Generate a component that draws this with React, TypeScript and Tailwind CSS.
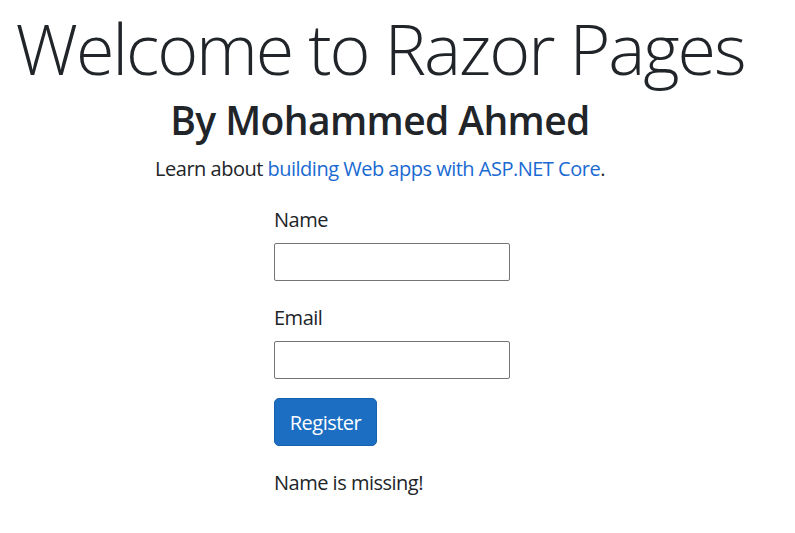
import React from "react";

export default function App() {
  return (
    <div className="min-h-[533px] bg-white text-[#212529]" style={{ fontFamily: '"Open Sans", "Noto Sans", sans-serif' }}>
      <div className="w-[760px] text-center">
        <h1 className="whitespace-nowrap text-[70px] font-light leading-[96px] tracking-[-2.1px]">Welcome to Razor Pages</h1>
        <h2 className="mt-[-3px] text-[39px] font-semibold leading-[54px] tracking-[-0.6px]">By Mohammed Ahmed</h2>
        <p className="mt-[7px] text-[20px] leading-[30px] tracking-[-0.5px]">
          Learn about{" "}
          <a href="#" className="text-[#1a6ad2]">
            building Web apps with ASP.NET Core
          </a>
          .
        </p>
      </div>
      <form className="mt-[19px] flex flex-col items-start pl-[274px] text-[20px] tracking-[-0.5px]">
        <label className="pt-[2px] leading-[30px]">Name</label>
        <input className="mt-[8px] h-[38px] w-[236px] rounded-[2px] border border-[#767676] bg-white" />
        <label className="mt-[20px] pt-[2px] leading-[30px]">Email</label>
        <input className="mt-[8px] h-[38px] w-[236px] rounded-[2px] border border-[#767676] bg-white" />
        <button type="button" className="mt-[19px] h-[48px] w-[103px] rounded-[5px] border border-[#1861ac] bg-[#1b6ec2] pt-[2px] text-[20px] text-white">
          Register
        </button>
        <p className="mt-[22px] leading-[30px]">Name is missing!</p>
      </form>
    </div>
  );
}
